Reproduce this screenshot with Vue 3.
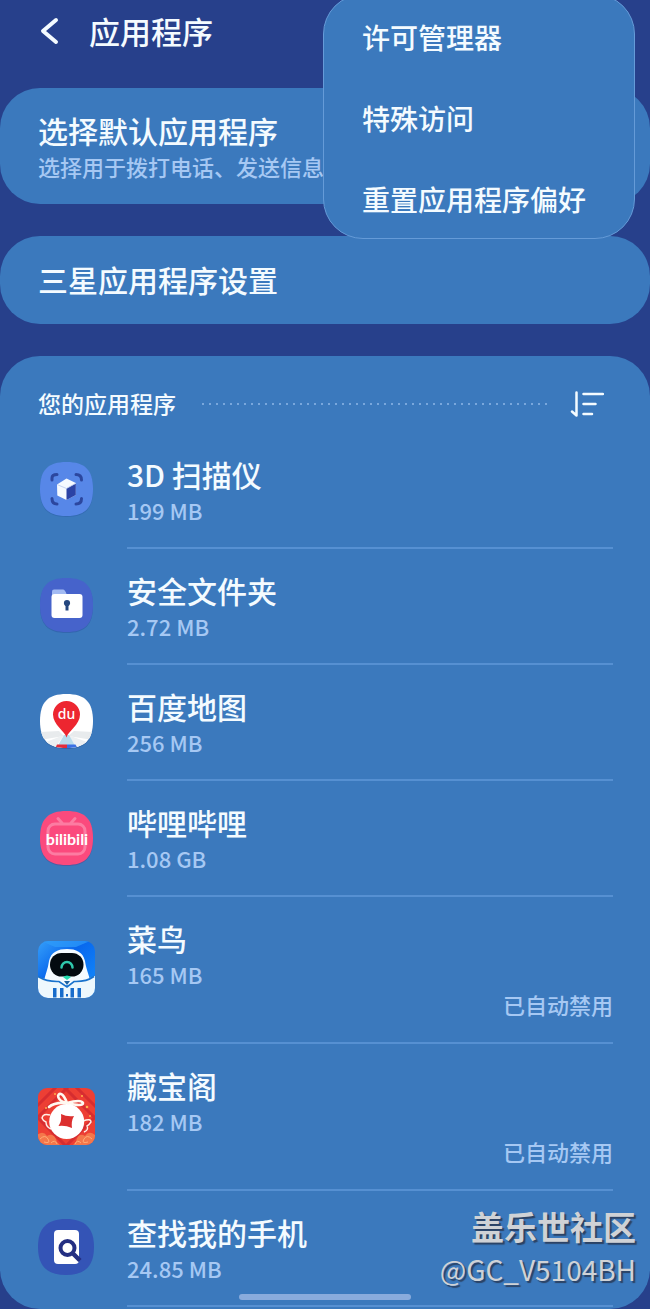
<script setup>
import { ref } from 'vue'

const menu = ['许可管理器', '特殊访问', '重置应用程序偏好']
const apps = ref([
  { id: 'scan', name: '3D 扫描仪', size: '199 MB' },
  { id: 'folder', name: '安全文件夹', size: '2.72 MB' },
  { id: 'map', name: '百度地图', size: '256 MB' },
  { id: 'bili', name: '哔哩哔哩', size: '1.08 GB' },
  { id: 'bird', name: '菜鸟', size: '165 MB', status: '已自动禁用' },
  { id: 'treasure', name: '藏宝阁', size: '182 MB', status: '已自动禁用' },
  { id: 'find', name: '查找我的手机', size: '24.85 MB' }
])
const squircle = 'M29.5 1C48 1 56 9 56 28S48 55 29.5 55S3 47 3 28S11 1 29.5 1Z'
</script>

<template>
  <div class="page">
    <header class="top">
      <button class="back" aria-label="返回">
        <svg width="22" height="30" viewBox="0 0 22 30"><path d="M18 4L5 15L18 26" fill="none" stroke="#f4fbff" stroke-width="4" stroke-linecap="round" stroke-linejoin="round" /></svg>
      </button>
      <h1>应用程序</h1>
    </header>

    <main>
      <button class="card link tall">
        <span class="title">选择默认应用程序</span>
        <span class="sub">选择用于拨打电话、发送信息、浏览网页等的应用程序。</span>
      </button>
      <button class="card link">
        <span class="title">三星应用程序设置</span>
      </button>

      <section class="card">
        <div class="list-head">
          <h2>您的应用程序</h2>
          <span class="dots"></span>
          <button class="sort" aria-label="排序">
            <svg width="34" height="28" viewBox="0 0 34 28" fill="none" stroke="#f4fbff" stroke-width="2.500" stroke-linecap="round" stroke-linejoin="round"><path d="M6.500 2.500V25.500L2 21.500M13.500 4H33M13.500 14H25.500M13.500 24H22" /></svg>
          </button>
        </div>

        <ul>
          <li v-for="app in apps" :key="app.id">
            <svg class="icon" width="58" height="58" viewBox="0 0 58 58" aria-hidden="true">
              <g v-if="app.id === 'scan'">
                <path :d="squircle" fill="#2f63ab" transform="translate(0 1)" opacity=".6" />
                <path :d="squircle" fill="#5787e8" />
                <path d="M15 19V17Q15 13.500 20 13.500M39 13.500Q44.500 13.500 44.500 19M15 37.500Q15 43 20 43M39 43Q44.500 43 44.500 37.500" fill="none" stroke="#2c479f" stroke-width="3" stroke-linecap="round" />
                <path d="M20 23.500L29.500 17.500L38.800 22L38.800 34L29.500 39L20.300 34.500Z" fill="#f5faff" />
                <path d="M29.500 27.500L38.800 22.500V34L29.500 39Z" fill="#2b43a5" />
                <path d="M20 23.500L29.500 27.500L38.800 22.300" fill="none" stroke="#b8c9ee" stroke-width=".8" />
              </g>

              <g v-else-if="app.id === 'folder'">
                <path :d="squircle" fill="#2f5aa5" transform="translate(0 1)" opacity=".6" />
                <path :d="squircle" fill="#4663cb" />
                <path d="M15 23V14.500Q15 12.500 17 12.500H26Q28 12.500 29.500 17V23Z" fill="#a3bbf3" />
                <rect x="14.500" y="17" width="31" height="24" rx="3" fill="#fff" />
                <circle cx="30" cy="26" r="3.100" fill="#24477f" />
                <path d="M30 26V33.500" stroke="#24477f" stroke-width="3" />
              </g>

              <g v-else-if="app.id === 'map'">
                <clipPath id="map-clip"><path :d="squircle" /></clipPath>
                <path :d="squircle" fill="#2c5c9a" transform="translate(0 1)" opacity=".6" />
                <path :d="squircle" fill="#fff" />
                <g clip-path="url(#map-clip)">
                  <path d="M3 39L22 38L27 43L3 47ZM56 39L37 38L31 43L56 47Z" fill="#e8ebed" />
                  <path d="M9 49L27 42L18 55ZM50 49L31 42L40 55Z" fill="#edf0f2" />
                  <path d="M27 42H32L40 56H19Z" fill="#b9dcec" />
                  <path d="M20 51.500H30V56H18Z" fill="#e32d3b" />
                  <path d="M30 51.500H38.500L41 56H30Z" fill="#3b70e4" />
                </g>
                <path d="M29.500 44.500C28 38 16 32 16 21.500A13.500 13.500 0 0 1 43 21.500C43 32 31 38 29.500 44.500Z" fill="#ed2630" />
                <text x="29.500" y="26" text-anchor="middle" class="du">du</text>
              </g>

              <g v-else-if="app.id === 'bili'">
                <path :d="squircle" fill="#5a4a91" transform="translate(0 2)" opacity=".6" />
                <path :d="squircle" fill="#fb4a7d" transform="translate(0 1)" />
                <path d="M21 9.500L25 14M38 9.500L34 14" stroke="#fc7ca2" stroke-width="3" stroke-linecap="round" />
                <rect x="11" y="15" width="37" height="30" rx="7" fill="none" stroke="#fc7ca2" stroke-width="3" />
                <text x="30" y="36" text-anchor="middle" class="bili">bilibili</text>
              </g>

              <g v-else-if="app.id === 'bird'">
                <linearGradient id="sky" x1="0" y1="0" x2="1" y2="1"><stop offset="0" stop-color="#36a0fa" /><stop offset=".4" stop-color="#0867ed" /><stop offset="1" stop-color="#1490ff" /></linearGradient>
                <clipPath id="bird-clip"><rect x="1" width="57" height="57" rx="10" /></clipPath>
                <g clip-path="url(#bird-clip)">
                  <rect width="58" height="58" fill="url(#sky)" />
                  <path d="M4 0H53L39 6H18Z" fill="#2f9cfa" opacity=".7" />
                  <path d="M7 40C8 34 11 28 12 20C14 11 21 8 30 8S46 11 48 20C49 28 52 33 53 40L43 44H15Z" fill="#f4fbff" />
                  <path d="M0 35Q8 39 22 40L30 45L37 40Q50 39 58 35V58H0Z" fill="#eef8fd" />
                  <path d="M1 35.500Q10 41 22 40.500L30 46L37 40.500Q49 41 57 35.500" fill="none" stroke="#1972cc" stroke-width="1.600" />
                  <path d="M27 40H33L30 44Z" fill="#1e62a2" />
                </g>
                <rect x="13" y="12" width="33.500" height="23.500" rx="11.500" fill="#030b10" />
                <path d="M24.500 26.500A5.500 5.500 0 0 1 35.500 26.500" fill="none" stroke="#2fc9ad" stroke-width="2.500" stroke-linecap="round" />
                <path d="M26 36Q30 33 34 36L30 39Z" fill="#24dcae" />
                <path d="M16 47H19.500V56.500H16ZM23 47H26.500V56.500H23ZM33.500 47H37V56.500H33.500ZM40.500 47H44V56.500H40.500ZM29 53H31V55.500H29Z" fill="#176ccb" />
              </g>

              <g v-else-if="app.id === 'treasure'">
                <clipPath id="treasure-clip"><rect x="1" width="57" height="57" rx="9" /></clipPath>
                <g clip-path="url(#treasure-clip)">
                  <rect width="58" height="58" fill="#ed3f34" />
                  <path d="M-4 22L22 -4M-4 34L34 -4M24 -4L62 34M36 -4L62 22M-4 25L29 58M62 25L29 58" stroke="#d62d30" stroke-width="3" />
                  <path d="M0 47Q6 42 10 48Q17 44 20 54L24 58H0ZM58 47Q52 42 48 48Q41 44 39 54L35 58H58Z" fill="#f4774b" />
                  <path d="M3 51Q8 46 11 51T7 54M55 51Q50 46 47 51T51 54M14 55Q18 51 20 56M44 55Q40 51 38 56" fill="none" stroke="#ffac76" stroke-width="1" />
                  <g fill="#ffb14b"><circle cx="9" cy="20" r="1" /><circle cx="50" cy="19" r="1.300" /><circle cx="45" cy="8" r="1" /><circle cx="18" cy="6" r="1" /><circle cx="53" cy="28" r="1" /></g>
                </g>
                <path d="M13 27Q6 25 5 30Q6 33 9 34Q9 39 14 41M46 33Q54 30 54 34Q52 37 50 38Q52 42 47 44" fill="none" stroke="#fff0e8" stroke-width="1.400" />
                <path d="M29 15C19 12 20 5 24 6Q27 7 30 15Q44 11 46 15Q46 19 30 15Q17 14 12 19" fill="none" stroke="#fff8f0" stroke-width="2.600" stroke-linejoin="round" stroke-linecap="round" />
                <circle cx="29.700" cy="33.500" r="17.500" fill="#fff" />
                <path d="M24 26Q30 29 37 28Q34 33 35 40Q28 37 21.500 38Q25 33 24 26Z" fill="#dc2f2e" />
              </g>

              <g v-else>
                <path d="M29 0C48 0 57 9 57 28S48 56 29 56S1 47 1 28S10 0 29 0Z" fill="#3454b6" />
                <rect x="17" y="11" width="25" height="34" rx="4" fill="#fff" />
                <path d="M36 34.500L43 41.500" stroke="#242f82" stroke-width="4.500" />
                <circle cx="30.500" cy="29" r="7" fill="#fff" stroke="#242f82" stroke-width="4" />
              </g>
            </svg>

            <div class="info">
              <h3 class="title">{{ app.name }}</h3>
              <p class="size">{{ app.size }}</p>
              <p v-if="app.status" class="status">{{ app.status }}</p>
            </div>
          </li>
        </ul>
      </section>
    </main>

    <nav class="menu" aria-label="更多选项">
      <button v-for="item in menu" :key="item">{{ item }}</button>
    </nav>

    <div class="watermark">
      <strong>盖乐世社区</strong>
      <span>@GC_V5104BH</span>
    </div>
    <div class="home-bar"></div>
  </div>
</template>

<style>
body {
  background: #27408b;
}
</style>

<style scoped>
.page {
  position: relative;
  overflow: hidden;
  min-height: 100vh;
  background: #27408b;
  color: #f4fbff;
  font-family: "Noto Sans CJK SC", sans-serif;
  font-weight: 500;
}
h1, h2, h3, p, ul {
  margin: 0;
  padding: 0;
  font-weight: 500;
}
button {
  margin: 0;
  padding: 0;
  border: 0;
  background: none;
  color: inherit;
  font: inherit;
  text-align: left;
  cursor: pointer;
}
svg {
  display: block;
}
.top {
  display: flex;
  align-items: center;
  gap: 29px;
  height: 62px;
  margin-bottom: 26px;
  padding-left: 38px;
}
h1 {
  font-size: 31px;
  line-height: 44px;
}
main {
  display: flex;
  flex-direction: column;
  gap: 32px;
}
.card {
  border-radius: 40px;
  background: #3b79bd;
}
.link {
  display: flex;
  flex-direction: column;
  justify-content: center;
  min-height: 88px;
  padding: 0 38px 2px;
}
.tall {
  min-height: 116px;
}
.title {
  font-size: 30px;
  line-height: 42px;
  white-space: nowrap;
}
.sub {
  overflow: hidden;
  max-width: 100%;
  color: #a6c8f3;
  font-size: 22px;
  line-height: 30px;
  white-space: nowrap;
}
section.card {
  padding-bottom: 2px;
}
.list-head {
  display: flex;
  align-items: center;
  padding: 18px 46px 0 38px;
  height: 59px;
}
h2 {
  padding-bottom: 2px;
  font-size: 23px;
  line-height: 34px;
}
.dots {
  flex: 1;
  height: 2px;
  margin: 0 20px 0 26px;
  background: repeating-linear-gradient(90deg, #79a7dc 0 2px, transparent 2px 7px);
}
ul {
  list-style: none;
}
li {
  display: flex;
  align-items: center;
  gap: 32px;
  padding: 0 37px;
}
.icon {
  flex: none;
  margin-bottom: 2px;
}
.info {
  flex: 1;
  padding: 20px 0 22px;
  border-bottom: 2px solid #5690d2;
}
.size {
  color: #a6c8f3;
  font-size: 22px;
  line-height: 30px;
}
.status {
  color: #a6c8f3;
  font-size: 22px;
  line-height: 31px;
  text-align: right;
}
.du {
  fill: #fff;
  font: 500 14px "Noto Sans", sans-serif;
}
.bili {
  fill: #fff;
  font: bold 16px Lato, sans-serif;
}
.menu {
  position: absolute;
  top: -6px;
  right: 15px;
  display: flex;
  flex-direction: column;
  gap: 9px;
  width: 48%;
  box-sizing: border-box;
  padding: 6px 0 3px;
  border: 1px solid #659bd8;
  border-radius: 40px;
  background: #3b79bd;
}
.menu button {
  height: 72px;
  padding-left: 38px;
  font-size: 28px;
  line-height: 40px;
}
.watermark {
  position: absolute;
  right: 14px;
  bottom: 18px;
  display: flex;
  flex-direction: column;
  align-items: flex-end;
  color: #cfd2d6;
  text-shadow: 2px 2px 1px #2b4264;
  pointer-events: none;
}
.watermark strong {
  font-size: 33px;
  line-height: 42px;
}
.watermark span {
  font-size: 28px;
  font-weight: 400;
  line-height: 44px;
}
.home-bar {
  position: absolute;
  bottom: 9px;
  left: 50%;
  width: 172px;
  height: 6px;
  margin-left: -86px;
  border-radius: 3px;
  background: #89abdc;
}
</style>
